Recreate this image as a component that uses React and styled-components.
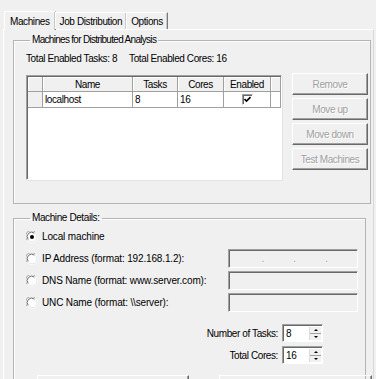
import React from "react";
import styled, { createGlobalStyle } from "styled-components";

const Global = createGlobalStyle`
  body { margin: 0; background: #f0f0f0; }
  * { box-sizing: border-box; }
`;

const Frame = styled.div`
  width: 376px;
  height: 379px;
  overflow: hidden;
  background: #f0f0f0;
  padding-top: 10px;
  font-family: "Liberation Sans", Arial, sans-serif;
  font-size: 10px;
  letter-spacing: -0.4px;
  color: #000;
`;

const TabStrip = styled.div`
  display: flex;
  align-items: flex-end;
  height: 19px;
  padding-left: 4px;
`;

const Tab = styled.div`
  height: ${(p) => (p.active ? "19px" : "17px")};
  padding: 0 ${(p) => (p.active ? "5px" : "4px")};
  display: flex;
  align-items: center;
  border-top: 1px solid #fff;
  border-left: 1px solid #fff;
  border-right: 1px solid #7a7a7a;
  box-shadow: inset -1px 0 #c8c8c8;
  margin-left: ${(p) => (p.active ? "0" : "-1px")};
  margin-bottom: ${(p) => (p.active ? "-1px" : "0")};
  background: #f0f0f0;
  position: relative;
`;

const TabPage = styled.div`
  margin: 0 2px 0 3px;
  height: 400px;
  border-top: 1px solid #fff;
  border-left: 1px solid #fff;
  border-right: 1px solid #d8d8d8;
  padding: 4px 0 0 9px;
`;

const Group = styled.fieldset`
  margin: 0;
  padding: ${(p) => p.pad};
  width: ${(p) => p.w}px;
  height: ${(p) => p.h}px;
  min-width: 0;
  border: 1px solid #b4b4b4;
  box-shadow: inset 1px 1px #fff;
  margin-bottom: 8px;
`;

const Legend = styled.legend`
  padding: 0 2px;
  margin-left: 4px;
  line-height: 12px;
  letter-spacing: ${(p) => (p.tight ? "-0.7px" : "-0.4px")};
`;

const Totals = styled.div`
  display: flex;
  gap: 12px;
  line-height: 12px;
`;

const ListRow = styled.div`
  display: flex;
  gap: 10px;
  margin-top: 10px;
`;

const Grid = styled.div`
  width: 256px;
  height: 105px;
  background: #fff;
  border-top: 1px solid #a0a0a0;
  border-left: 1px solid #a0a0a0;
  border-right: 1px solid #fff;
  border-bottom: 1px solid #fff;
  box-shadow: inset 1px 1px #696969, 1px 1px #e3e3e3;
  padding: 1px 0 0 1px;
  display: grid;
  grid-template-columns: 15px 90px 45px 46px 47px 1fr;
  grid-template-rows: 15px 16px;
  align-content: start;
`;

const Head = styled.div`
  background: #f0f0f0;
  border-right: 1px solid #a0a0a0;
  border-bottom: 1px solid #a0a0a0;
  box-shadow: inset 1px 1px #fff;
  display: flex;
  align-items: center;
  justify-content: center;
`;

const Cell = styled.div`
  border-right: 1px solid #a0a0a0;
  border-bottom: 1px solid #a0a0a0;
  display: flex;
  align-items: center;
  justify-content: ${(p) => (p.center ? "center" : "flex-start")};
  padding-left: ${(p) => (p.center ? "0" : "2px")};
  background: ${(p) => (p.grey ? "#f0f0f0" : "#fff")};
`;

const CheckBox = styled.div`
  width: 11px;
  height: 11px;
  background: #fff;
  border-top: 1px solid #a0a0a0;
  border-left: 1px solid #a0a0a0;
  border-right: 1px solid #fff;
  border-bottom: 1px solid #fff;
  box-shadow: inset 1px 1px #696969;
  display: flex;
  align-items: center;
  justify-content: center;
`;

const ButtonCol = styled.div`
  display: flex;
  flex-direction: column;
  gap: 3px;
  margin-top: -2px;
`;

const WinButton = styled.div`
  width: ${(p) => p.w || 76}px;
  height: 22px;
  flex-shrink: 0;
  display: flex;
  align-items: center;
  justify-content: center;
  border-top: 1px solid #fff;
  border-left: 1px solid #fff;
  border-right: 1px solid #696969;
  border-bottom: 1px solid #696969;
  box-shadow: inset -1px -1px #a0a0a0;
  color: #a0a0a0;
  text-shadow: 1px 1px #fff;
`;

const OptionRow = styled.div`
  display: flex;
  align-items: center;
  height: 19px;
  margin-bottom: 3px;
`;

const OptionLabel = styled.div`
  flex: 1;
  display: flex;
  align-items: center;
  gap: 4px;
  letter-spacing: -0.15px;
`;

const Field = styled.div`
  width: 130px;
  height: 19px;
  background: #f0f0f0;
  border-top: 1px solid #a0a0a0;
  border-left: 1px solid #a0a0a0;
  border-right: 1px solid #fff;
  border-bottom: 1px solid #fff;
  box-shadow: inset 1px 1px #696969;
  display: flex;
  align-items: center;
  justify-content: space-evenly;
  padding-left: 3px;
  color: #a0a0a0;
  text-shadow: 1px 1px #fff;
`;

const SpinRow = styled.div`
  display: flex;
  justify-content: flex-end;
  align-items: center;
  gap: 4px;
  padding-right: 35px;
  margin-top: ${(p) => p.mt}px;
`;

const SpinBox = styled.div`
  width: 41px;
  height: 18px;
  background: #fff;
  border-top: 1px solid #a0a0a0;
  border-left: 1px solid #a0a0a0;
  border-right: 1px solid #fff;
  border-bottom: 1px solid #fff;
  box-shadow: inset 1px 1px #696969;
  display: flex;
  padding: 2px 1px 1px 3px;
`;

const SpinValue = styled.div`
  flex: 1;
  line-height: 13px;
`;

const SpinButtons = styled.div`
  width: 12px;
  display: flex;
  flex-direction: column;
  border-left: 1px solid #dcdcdc;
`;

const SpinHalf = styled.div`
  flex: 1;
  display: flex;
  align-items: center;
  justify-content: center;
  background: #f0f0f0;
  border-bottom: ${(p) => (p.top ? "1px solid #a0a0a0" : "none")};
  &::after {
    content: "";
    border-left: 2px solid transparent;
    border-right: 2px solid transparent;
    ${(p) => (p.top ? "border-bottom: 2px solid #000;" : "border-top: 2px solid #000;")}
  }
`;

const BottomRow = styled.div`
  display: flex;
  gap: 30px;
  padding-left: 11px;
  margin-top: 11px;
`;

const Radio = ({ checked }) => (
  <svg width="12" height="12" viewBox="0 0 12 12">
    <circle cx="6" cy="6" r="5.5" fill="#fff" stroke="#fff" />
    <path d="M1.2 9.2 A5.5 5.5 0 0 1 9.2 1.2" fill="none" stroke="#a0a0a0" strokeWidth="1" />
    <path d="M2.2 8.4 A4.4 4.4 0 0 1 8.4 2.2" fill="none" stroke="#696969" strokeWidth="1" />
    <path d="M9.5 2.6 A4.6 4.6 0 0 1 2.6 9.5" fill="none" stroke="#e3e3e3" strokeWidth="1" />
    {checked && <circle cx="6" cy="6" r="2" fill="#000" />}
  </svg>
);

const Check = () => (
  <svg width="7" height="7" viewBox="0 0 7 7">
    <path d="M0.5 3 L2.5 5 L6.5 1" fill="none" stroke="#000" strokeWidth="1.6" />
  </svg>
);

const Spinner = ({ label, value, mt }) => (
  <SpinRow mt={mt}>
    <span>{label}</span>
    <SpinBox>
      <SpinValue>{value}</SpinValue>
      <SpinButtons>
        <SpinHalf top />
        <SpinHalf />
      </SpinButtons>
    </SpinBox>
  </SpinRow>
);

const columns = ["", "Name", "Tasks", "Cores", "Enabled", ""];

export default function App() {
  return (
    <Frame>
      <Global />
      <TabStrip>
        <Tab active>Machines</Tab>
        <Tab>Job Distribution</Tab>
        <Tab>Options</Tab>
      </TabStrip>
      <TabPage>
        <Group w={358} h={170} pad="7px 0 0 12px">
          <Legend tight>Machines for Distributed Analysis</Legend>
          <Totals>
            <span>Total Enabled Tasks: 8</span>
            <span>Total Enabled Cores: 16</span>
          </Totals>
          <ListRow>
            <Grid>
              {columns.map((c, i) => (
                <Head key={i}>{c}</Head>
              ))}
              <Cell grey />
              <Cell>localhost</Cell>
              <Cell>8</Cell>
              <Cell>16</Cell>
              <Cell center>
                <CheckBox>
                  <Check />
                </CheckBox>
              </Cell>
              <Cell />
            </Grid>
            <ButtonCol>
              <WinButton>Remove</WinButton>
              <WinButton>Move up</WinButton>
              <WinButton>Move down</WinButton>
              <WinButton>Test Machines</WinButton>
            </ButtonCol>
          </ListRow>
        </Group>
        <Group w={353} h={260} pad="3px 7px 0 12px">
          <Legend>Machine Details:</Legend>
          <OptionRow>
            <OptionLabel>
              <Radio checked />
              Local machine
            </OptionLabel>
          </OptionRow>
          <OptionRow>
            <OptionLabel>
              <Radio />
              IP Address (format: 192.168.1.2):
            </OptionLabel>
            <Field>
              <span>.</span>
              <span>.</span>
              <span>.</span>
            </Field>
          </OptionRow>
          <OptionRow>
            <OptionLabel>
              <Radio />
              DNS Name (format: www.server.com):
            </OptionLabel>
            <Field />
          </OptionRow>
          <OptionRow>
            <OptionLabel>
              <Radio />
              UNC Name (format: \\server):
            </OptionLabel>
            <Field />
          </OptionRow>
          <Spinner label="Number of Tasks:" value="8" mt={12} />
          <Spinner label="Total Cores:" value="16" mt={4} />
          <BottomRow>
            <WinButton w={152} />
            <WinButton w={153} />
          </BottomRow>
        </Group>
      </TabPage>
    </Frame>
  );
}
